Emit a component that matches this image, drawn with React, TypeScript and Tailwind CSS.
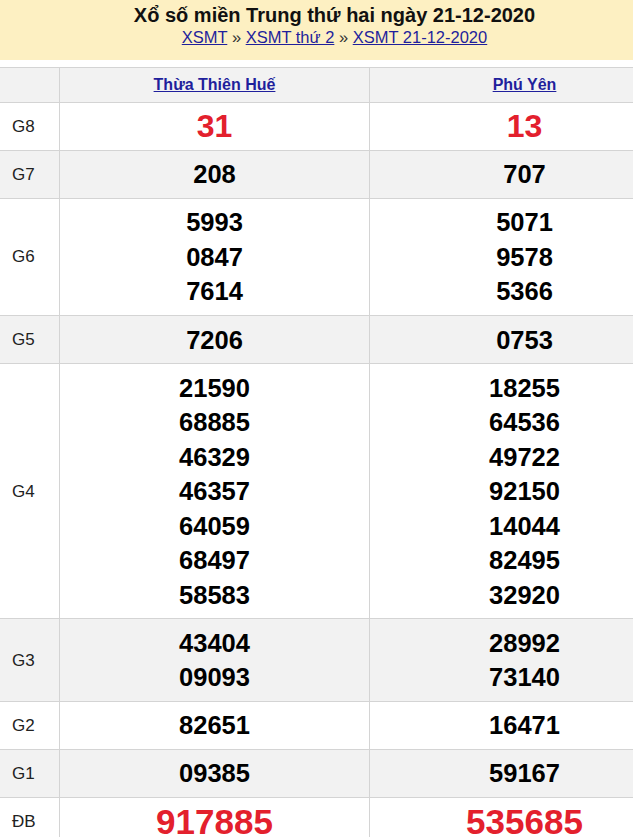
import React from "react";

type Row = { label: string; a: string[]; b: string[]; kind?: "g8" | "db" };

const rows: Row[] = [
  { label: "G8", a: ["31"], b: ["13"], kind: "g8" },
  { label: "G7", a: ["208"], b: ["707"] },
  { label: "G6", a: ["5993", "0847", "7614"], b: ["5071", "9578", "5366"] },
  { label: "G5", a: ["7206"], b: ["0753"] },
  {
    label: "G4",
    a: ["21590", "68885", "46329", "46357", "64059", "68497", "58583"],
    b: ["18255", "64536", "49722", "92150", "14044", "82495", "32920"],
  },
  { label: "G3", a: ["43404", "09093"], b: ["28992", "73140"] },
  { label: "G2", a: ["82651"], b: ["16471"] },
  { label: "G1", a: ["09385"], b: ["59167"] },
  { label: "ĐB", a: ["917885"], b: ["535685"], kind: "db" },
];

function NumCell({ nums, kind, shaded }: { nums: string[]; kind?: "g8" | "db"; shaded: boolean }) {
  const cls =
    kind === "g8"
      ? "text-[32px] text-[#e3202d]"
      : kind === "db"
      ? "text-[35px] text-[#e3202d]"
      : "text-[25.5px] text-black";
  return (
    <div
      className={`w-[310px] border-r border-b border-[#d4d4d4] py-[6.3px] flex flex-col items-center ${
        shaded ? "bg-[#f2f2f2]" : "bg-white"
      }`}
    >
      {nums.map((n) => (
        <div key={n} className={`font-bold leading-[34.5px] ${cls}`}>
          {n}
        </div>
      ))}
    </div>
  );
}

export default function App() {
  return (
    <div
      className="w-[633px] h-[837px] overflow-hidden bg-white"
      style={{ fontFamily: '"Liberation Sans", Arial, sans-serif' }}
    >
      <div className="w-[669px] h-[60px] bg-[#fdf0c2] flex flex-col items-center pt-[3px]">
        <div className="text-[20px] leading-[24px] font-bold text-[#111]">
          Xổ số miền Trung thứ hai ngày 21-12-2020
        </div>
        <div className="text-[16.5px] leading-[21px] text-[#333]">
          <a className="underline text-[#1f1f9c]">XSMT</a>
          <span> » </span>
          <a className="underline text-[#1f1f9c]">XSMT thứ 2</a>
          <span> » </span>
          <a className="underline text-[#1f1f9c]">XSMT 21-12-2020</a>
        </div>
      </div>

      <div className="mt-[7px] w-[680px] border-t border-[#d4d4d4]">
        <div className="flex bg-[#f2f2f2]">
          <div className="w-[60px] h-[35px] border-r border-b border-[#d4d4d4]" />
          <div className="w-[310px] h-[35px] border-r border-b border-[#d4d4d4] flex items-center justify-center">
            <a className="text-[16px] font-bold underline text-[#1f1f9c]">Thừa Thiên Huế</a>
          </div>
          <div className="w-[310px] h-[35px] border-r border-b border-[#d4d4d4] flex items-center justify-center">
            <a className="text-[16px] font-bold underline text-[#1f1f9c]">Phú Yên</a>
          </div>
        </div>
        {rows.map((r, i) => {
          const shaded = i % 2 === 1;
          return (
            <div key={r.label} className="flex">
              <div
                className={`w-[60px] border-r border-b border-[#d4d4d4] flex items-center pl-[12px] text-[17px] text-[#222] ${
                  shaded ? "bg-[#f2f2f2]" : "bg-white"
                }`}
              >
                {r.label}
              </div>
              <NumCell nums={r.a} kind={r.kind} shaded={shaded} />
              <NumCell nums={r.b} kind={r.kind} shaded={shaded} />
            </div>
          );
        })}
      </div>
    </div>
  );
}
